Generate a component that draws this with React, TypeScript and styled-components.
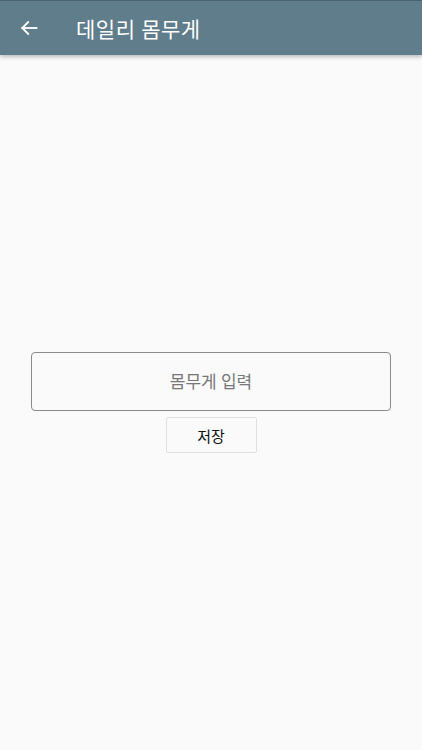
import styled, { createGlobalStyle } from 'styled-components'

const GlobalStyle = createGlobalStyle`
  html, body {
    margin: 0;
    padding: 0;
    background-color: #fafafa;
    font-family: Roboto, "Noto Sans CJK KR", "Noto Sans", sans-serif;
  }
`

const Screen = styled.div`
  width: 100%;
  height: 100vh;
  display: flex;
  flex-direction: column;
  background-color: #fafafa;
`

const AppBar = styled.header`
  position: relative;
  z-index: 1;
  height: 55px;
  flex-shrink: 0;
  display: flex;
  align-items: center;
  padding-left: 18px;
  background-color: #607d8b;
  border-top: 1px solid #4d6470;
  box-sizing: border-box;
  box-shadow: 0 2px 4px rgba(0, 0, 0, 0.25);
`

const BackButton = styled.button`
  display: flex;
  align-items: center;
  justify-content: center;
  width: 22px;
  height: 22px;
  padding: 0;
  border: none;
  background: transparent;
  color: white;
  cursor: pointer;
`

const Title = styled.h1`
  margin: 0 0 0 36px;
  font-size: 21px;
  font-weight: 400;
  color: white;
  letter-spacing: 0.5px;
`

const Body = styled.main`
  flex: 1;
  display: flex;
  flex-direction: column;
  align-items: center;
  justify-content: center;
  padding: 0 31px;
`

const WeightInput = styled.input`
  width: 100%;
  height: 59px;
  box-sizing: border-box;
  border: 1px solid #8a8a8a;
  border-radius: 4px;
  background-color: #fafafa;
  font-family: Roboto, "Noto Sans CJK KR", sans-serif;
  font-size: 17px;
  text-align: center;
  color: #333;

  &::placeholder {
    color: #777;
  }

  &:focus {
    outline: none;
    border-color: #607d8b;
  }
`

const SaveButton = styled.button`
  margin-top: 6px;
  width: 91px;
  height: 36px;
  border: 1px solid #e0e0e0;
  border-radius: 2px;
  background-color: #fafafa;
  font-family: Roboto, "Noto Sans CJK KR", sans-serif;
  font-size: 15px;
  color: #111;
  cursor: pointer;

  &:hover {
    background-color: #f0f0f0;
  }
`

export default function App() {
  return (
    <>
      <GlobalStyle />
      <Screen>
        <AppBar>
          <BackButton aria-label="뒤로">
            <svg width="20" height="20" viewBox="0 0 24 24" fill="none" stroke="currentColor" strokeWidth="2.2" strokeLinecap="square">
              <path d="M21 12H4" />
              <path d="M11 5l-7 7 7 7" />
            </svg>
          </BackButton>
          <Title>데일리 몸무게</Title>
        </AppBar>
        <Body>
          <WeightInput placeholder="몸무게 입력" />
          <SaveButton>저장</SaveButton>
        </Body>
      </Screen>
    </>
  )
}
